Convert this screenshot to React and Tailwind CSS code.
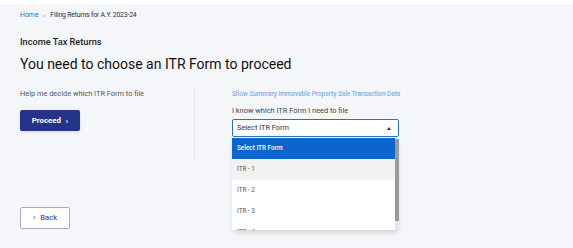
import React from "react";

const options = ["ITR - 1", "ITR - 2", "ITR - 3", "ITR - 4"];

export default function App() {
    return (
        <div className="w-[573px] h-[248px] overflow-hidden bg-[#f5f6fa] font-['Roboto',sans-serif]">
            <div className="h-[4px] bg-white" />
            <div className="px-[20px]">
                <div className="flex items-center gap-[5px] pt-[6px] text-[6.9px] leading-[10px]">
                    <span className="text-[#2d6fc4]">Home</span>
                    <span className="text-[#666] text-[6px]">›</span>
                    <span className="text-[#333] tracking-[-0.2px]">Filing Returns for A.Y. 2023-24</span>
                </div>
                <h2 className="mt-[16px] text-[9.2px] leading-[12px] font-medium text-[#222]">Income Tax Returns</h2>
                <h1 className="mt-[7px] text-[14px] leading-[18px] text-[#111]">
                    You need to choose an ITR Form to proceed
                </h1>
                <div className="mt-[15px] flex">
                    <div className="w-[174px] pt-[1px]">
                        <p className="text-[7.4px] leading-[10px] text-[#555]">Help me decide which ITR Form to file</p>
                        <button className="mt-[11px] w-[60px] h-[21px] rounded-[2px] bg-[#25348a] text-white text-[7.8px] font-bold flex items-center justify-center gap-[5px] shadow-sm">
                            Proceed <span className="text-[8px] leading-[8px]">›</span>
                        </button>
                    </div>
                    <div className="w-[1px] h-[73px] bg-[#e6e7ec]" />
                    <div className="pl-[37px] pt-[1px]">
                        <p className="text-[6.4px] leading-[10px] text-[#7fb0e0] font-medium">
                            Show Summary Immovable Property Sale Transaction Data
                        </p>
                        <p className="mt-[7px] text-[7.4px] leading-[10px] text-[#444]">I know which ITR Form I need to file</p>
                        <div className="relative mt-[3px] w-[167px]">
                            <div className="h-[18px] bg-white border border-[#2a6fcf] rounded-[2px] flex items-center justify-between pl-[4px] pr-[4px] text-[7.4px] text-[#333]">
                                <span>Select ITR Form</span>
                                <span className="w-0 h-0 border-l-[2.5px] border-r-[2.5px] border-b-[3px] border-l-transparent border-r-transparent border-b-[#333] mr-[3px]" />
                            </div>
                            <div className="absolute left-0 top-[19px] w-[167px] h-[92px] bg-white shadow-md overflow-hidden flex">
                                <div className="flex-1">
                                    <div className="h-[21px] bg-[#0a66cc] text-white text-[6.4px] font-medium flex items-center px-[5px]">
                                        Select ITR Form
                                    </div>
                                    {options.map((o, i) => (
                                        <div
                                            key={o}
                                            className={
                                                i === 0
                                                    ? "h-[21px] bg-[#f1f1f1] text-[#555] text-[6.4px] flex items-center px-[5px]"
                                                    : "h-[21px] bg-white text-[#555] text-[6.4px] flex items-center px-[5px]"
                                            }
                                        >
                                            {o}
                                        </div>
                                    ))}
                                </div>
                                <div className="w-[4px] bg-[#e3e6ee] pt-[1px]">
                                    <div className="h-[82px] bg-[#9a9a9a]" />
                                </div>
                            </div>
                        </div>
                    </div>
                </div>
                <button className="mt-[46px] w-[50px] h-[22px] rounded-[2px] border border-[#a9adc6] bg-white text-[#2a3478] text-[7.6px] flex items-center justify-center gap-[5px]">
                    <span className="text-[8px] leading-[8px]">‹</span> Back
                </button>
            </div>
        </div>
    );
}
